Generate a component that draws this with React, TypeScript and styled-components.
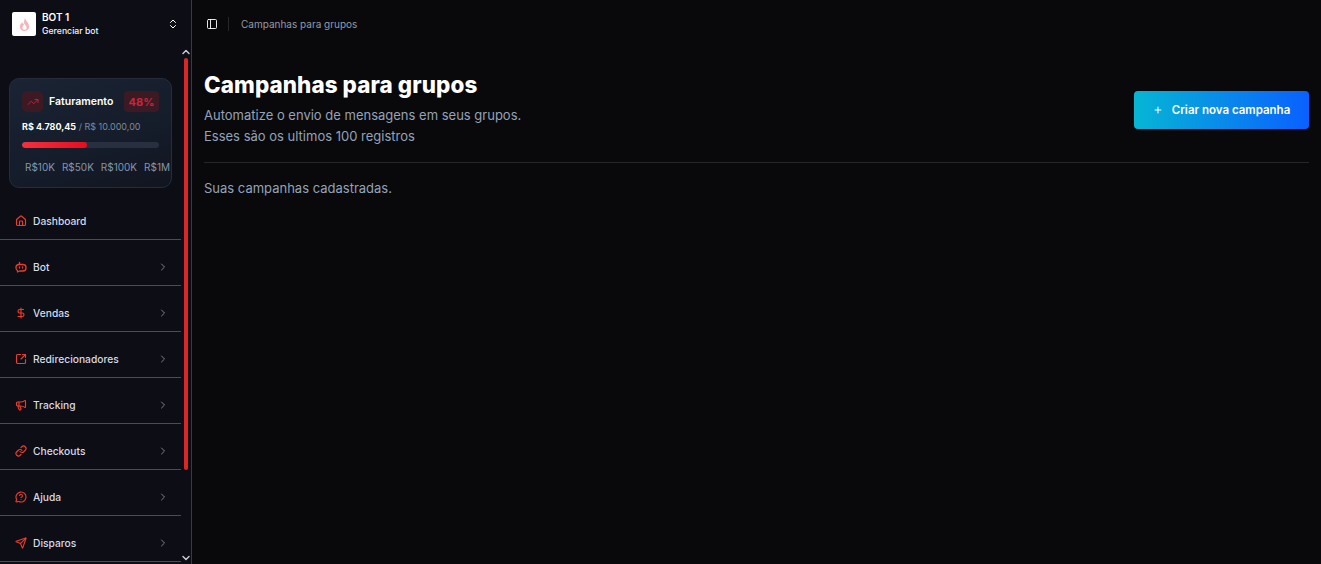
import React from "react";
import styled, { createGlobalStyle } from "styled-components";
import { ChevronRight, ChevronsUpDown, Home, DollarSign, SquareArrowOutUpRight, Megaphone, Link, MessageCircleQuestion, Send, Plus, PanelLeft, TrendingUp, ChevronUp, ChevronDown } from "lucide-react";

const Global = createGlobalStyle`
  html, body { margin: 0; padding: 0; height: 100%; background: #09090b; overflow: hidden; }
  * { box-sizing: border-box; }
  body { font-family: Inter, "Liberation Sans", sans-serif; }
`;
const Shell = styled.div`display: flex; width: 1321px; height: 564px; overflow: hidden;`;
const Sidebar = styled.aside`width: 192px; flex: none; display: flex; flex-direction: column; background: #0c0d15; border-right: 1px solid #3a3b42; height: 564px;`;
const BotHeader = styled.div`height: 44px; flex: none; display: flex; align-items: center; padding: 4px 12px 0 12px; gap: 6px; color: #fff;`;
const Logo = styled.div`width: 24px; height: 24px; background: #fff; border-radius: 2px; display: flex; align-items: center; justify-content: center;`;
const BotText = styled.div`flex: 1; display: flex; flex-direction: column; gap: 3px;`;
const BotName = styled.div`font-size: 10px; font-weight: 600; line-height: 11px;`;
const BotSub = styled.div`font-size: 8.700px; font-weight: 500; line-height: 11px; color: #eef2ff;`;
const Body = styled.div`flex: 1; display: flex; min-height: 0; overflow: hidden;`;
const Content = styled.div`width: 181px; flex: none; padding-top: 34px;`;
const Rail = styled.div`width: 10px; display: flex; flex-direction: column; align-items: center; color: #c7c9d0;`;
const RailArrow = styled.div`height: 14px; display: flex; align-items: center; justify-content: center; padding-top: 1px;`;
const Thumb = styled.div`width: 4px; height: 412px; background: #dc2626; border-radius: 2px; margin-bottom: 80px; margin-left: -1px;`;
const Card = styled.div`width: 163px; height: 110px; margin-left: 9px; padding: 12px 12px 0; border-radius: 10px; border: 1px solid #252c3a; background: linear-gradient(160deg, #1a2434 0%, #151c2a 60%, #11151f 100%); margin-bottom: 6px;`;
const CardTop = styled.div`display: flex; align-items: center; height: 21px;`;
const TrendBox = styled.div`width: 21px; height: 21px; border-radius: 5px; background: #3b1a24; color: #b3243a; display: flex; align-items: center; justify-content: center; margin-right: 6px;`;
const CardTitle = styled.div`flex: 1; color: #fff; font-size: 10.500px; font-weight: 600;`;
const Percent = styled.div`width: 35px; height: 21px; border-radius: 4px; background: #3b1a24; color: #c9253c; font-size: 11px; font-weight: 700; display: flex; align-items: center; justify-content: center;`;
const Amount = styled.div`margin-top: 9px; font-size: 9px; line-height: 12px; color: #7c8a9e; white-space: nowrap;`;
const AmountStrong = styled.span`color: #fff; font-weight: 700;`;
const Track = styled.div`height: 6px; margin-top: 9px; background: #28303f; border-radius: 3px; overflow: hidden;`;
const Fill = styled.div`height: 100%; background: linear-gradient(90deg, #f5303f, #e60d1e); border-radius: 3px;`;
const Marks = styled.div`display: flex; margin-top: 13px; margin-left: 3px; justify-content: space-between; font-size: 10px; line-height: 12px; color: #8796aa; white-space: nowrap; width: 145px;`;
const MenuItem = styled.div`height: 46px; display: flex; align-items: center; padding: 9px 12px 0 15px; border-bottom: 1px solid #4b4c55; color: #d6dbe6; font-size: 10.250px; font-weight: 500;`;
const MenuIcon = styled.span`width: 12px; height: 12px; display: flex; align-items: center; justify-content: center; color: #ee3b2b; margin-right: 6px;`;
const MenuLabel = styled.span`flex: 1;`;
const Chevron = styled.span`display: flex; color: #7f828c;`;
const Main = styled.main`flex: 1; min-width: 0; background: #09090b; padding: 0 12px;`;
const TopBar = styled.div`height: 48px; display: flex; align-items: center; padding-left: 2px; color: #fff;`;
const Sep = styled.div`width: 1px; height: 14px; background: #27272a; margin: 0 12px 0 10px;`;
const Crumb = styled.div`font-size: 10px; color: #929aa6;`;
const Header = styled.div`display: flex; justify-content: space-between; align-items: center; padding: 23px 0 15px; border-bottom: 1px solid #27272a;`;
const Title = styled.h1`margin: 0 0 7px; font-size: 22.400px; line-height: 27px; font-weight: 800; color: #fff; letter-spacing: 0.1px;`;
const Desc = styled.p`margin: 0; font-size: 13px; line-height: 21px; color: #94a3b8;`;
const CreateButton = styled.button`width: 175px; height: 38px; border: none; border-radius: 4px; margin-top: 1px; background: linear-gradient(90deg, #06b6d4, #0a60ff); color: #fff; font: 600 11.500px Inter, sans-serif; display: flex; align-items: center; justify-content: center; gap: 9px;`;
const Sub = styled.p`margin: 17px 0 0; font-size: 13px; line-height: 16px; color: #94a3b8;`;

function BotIcon({ size }: { size: number }) {
  return (
    <svg width={size} height={size} viewBox="0 0 24 24" fill="none" stroke="currentColor" strokeWidth="2.600" strokeLinecap="round" strokeLinejoin="round">
      <path d="M9 7V3" />
      <path d="M8 7h8a6 6 0 0 1 6 6v1a6 6 0 0 1-6 6H9l-4 2v-3a6 6 0 0 1-3-5v-1a6 6 0 0 1 6-6Z" />
      <path d="M9 12v2M15 12v2" />
    </svg>
  );
}

const items = [
  ["Dashboard", Home, false], ["Bot", BotIcon, true], ["Vendas", DollarSign, true],
  ["Redirecionadores", SquareArrowOutUpRight, true], ["Tracking", Megaphone, true], ["Checkouts", Link, true],
  ["Ajuda", MessageCircleQuestion, true], ["Disparos", Send, true],
] as const;

export default function App() {
  return (
    <Shell>
      <Global />
      <Sidebar>
        <BotHeader>
          <Logo>
            <svg width="11" height="15" viewBox="0 0 12 16"><path d="M6.500 1C7 4 11 6 11 10.200 11 13.400 8.800 15 6 15S1 13.400 1 10.400C1 8 2.500 6.800 3.300 5.500 4 7 4.600 7.500 5 7.600 5.600 5.500 5.600 3 6.500 1Z" fill="#f9b4b9"/><path d="M6 6.500c.4 1.800 2.300 2.800 2.300 5C8.300 13 7 13.700 6 13.700S3.700 13 3.700 11.500C3.700 9.800 5.500 8.500 6 6.500Z" fill="#fff"/></svg>
          </Logo>
          <BotText><BotName>BOT 1</BotName><BotSub>Gerenciar bot</BotSub></BotText>
          <ChevronsUpDown size={12} strokeWidth={2} />
        </BotHeader>
        <Body>
          <Content>
            <Card>
              <CardTop>
                <TrendBox><TrendingUp size={12} strokeWidth={2} /></TrendBox>
                <CardTitle>Faturamento</CardTitle>
                <Percent>48%</Percent>
              </CardTop>
              <Amount><AmountStrong>R$ 4.780,45</AmountStrong> / R$ 10.000,00</Amount>
              <Track><Fill style={{ width: "47.800%" }} /></Track>
              <Marks><span>R$10K</span><span>R$50K</span><span>R$100K</span><span>R$1M</span></Marks>
            </Card>
            {items.map(([label, Icon, more]) => (
              <MenuItem key={label}>
                <MenuIcon><Icon size={12} strokeWidth={2.300} /></MenuIcon>
                <MenuLabel>{label}</MenuLabel>
                {more && <Chevron><ChevronRight size={12} strokeWidth={2} /></Chevron>}
              </MenuItem>
            ))}
          </Content>
          <Rail>
            <RailArrow><ChevronUp size={12} strokeWidth={3} /></RailArrow>
            <Thumb />
            <RailArrow><ChevronDown size={12} strokeWidth={3} /></RailArrow>
          </Rail>
        </Body>
      </Sidebar>
      <Main>
        <TopBar>
          <PanelLeft size={12} strokeWidth={1.800} />
          <Sep />
          <Crumb>Campanhas para grupos</Crumb>
        </TopBar>
        <Header>
          <div>
            <Title>Campanhas para grupos</Title>
            <Desc>Automatize o envio de mensagens em seus grupos.<br />Esses são os ultimos 100 registros</Desc>
          </div>
          <CreateButton><Plus size={10} strokeWidth={2.500} />Criar nova campanha</CreateButton>
        </Header>
        <Sub>Suas campanhas cadastradas.</Sub>
      </Main>
    </Shell>
  );
}
